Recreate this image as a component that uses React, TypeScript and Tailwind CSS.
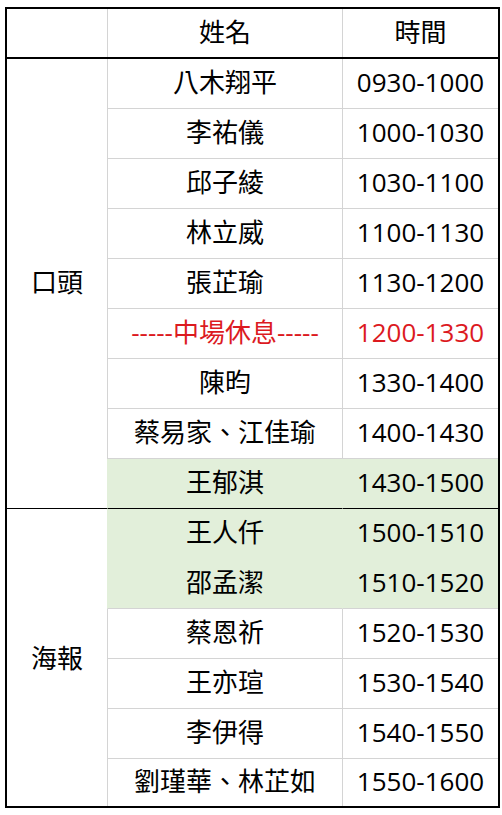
import React from 'react';

type Row = { name: string; time: string; green?: boolean; red?: boolean };

const oral: Row[] = [
  { name: '八木翔平', time: '0930-1000' },
  { name: '李祐儀', time: '1000-1030' },
  { name: '邱子綾', time: '1030-1100' },
  { name: '林立威', time: '1100-1130' },
  { name: '張芷瑜', time: '1130-1200' },
  { name: '-----中場休息-----', time: '1200-1330', red: true },
  { name: '陳昀', time: '1330-1400' },
  { name: '蔡易家、江佳瑜', time: '1400-1430' },
  { name: '王郁淇', time: '1430-1500', green: true },
];

const poster: Row[] = [
  { name: '王人仟', time: '1500-1510', green: true },
  { name: '邵孟潔', time: '1510-1520', green: true },
  { name: '蔡恩祈', time: '1520-1530' },
  { name: '王亦瑄', time: '1530-1540' },
  { name: '李伊得', time: '1540-1550' },
  { name: '劉瑾華、林芷如', time: '1550-1600' },
];

const font = { fontFamily: "'Open Sans','Noto Sans CJK TC',sans-serif" };

function Cells({ row, last, groupEnd, noLine }: { row: Row; last?: boolean; groupEnd?: boolean; noLine?: boolean }) {
  const bottom = last
    ? ''
    : groupEnd
    ? 'border-b border-b-black'
    : noLine
    ? 'border-b border-b-[#e2efda]'
    : 'border-b border-b-[#d4d4d4]';
  const bg = row.green ? 'bg-[#e2efda]' : 'bg-white';
  const side = row.green ? 'border-l-[#e2efda]' : 'border-l-[#d4d4d4]';
  const color = row.red ? 'text-[#dc1a1f]' : 'text-black';
  return (
    <>
      <div className={`flex items-center justify-center pb-[3px] border-l ${side} ${bg} ${bottom} ${color}`}>
        {row.name}
      </div>
      <div className={`flex items-center justify-center pb-[3px] border-l ${side} ${bg} ${bottom} ${color}`}>
        {row.time}
      </div>
    </>
  );
}

export default function App() {
  return (
    <div className="min-h-[815px] w-[502px] bg-white pt-[7px] pl-[5px]" style={font}>
      <div className="w-[495px] border-2 border-black text-[26px] leading-none">
        <div className="grid grid-cols-[100px_235px_156px] h-[50px] border-b-2 border-black">
          <div />
          <div className="flex items-center justify-center pb-[3px] border-l border-l-[#d4d4d4]">姓名</div>
          <div className="flex items-center justify-center pb-[3px] border-l border-l-[#d4d4d4]">時間</div>
        </div>
        <div className="grid grid-cols-[100px_235px_156px] grid-rows-[repeat(9,50px)]">
          <div className="row-span-9 flex items-center justify-center pb-[3px] border-b border-black">口頭</div>
          {oral.map((r, i) => (
            <Cells key={r.time} row={r} groupEnd={i === oral.length - 1} />
          ))}
        </div>
        <div className="grid grid-cols-[100px_235px_156px] grid-rows-[repeat(5,50px)_47px]">
          <div className="row-span-6 flex items-center justify-center">海報</div>
          {poster.map((r, i) => (
            <Cells key={r.time} row={r} last={i === poster.length - 1} noLine={i === 0} />
          ))}
        </div>
      </div>
    </div>
  );
}
